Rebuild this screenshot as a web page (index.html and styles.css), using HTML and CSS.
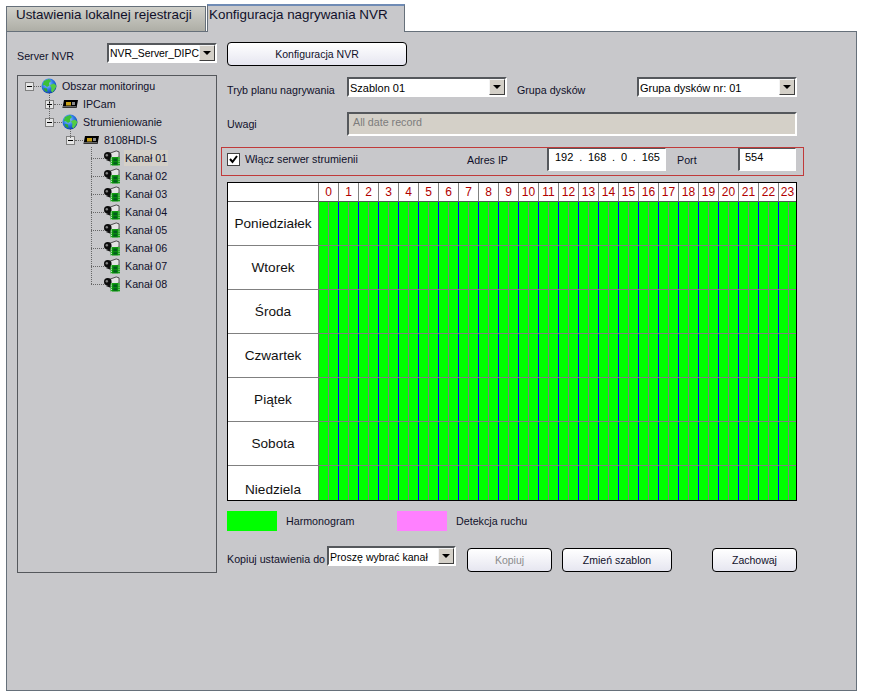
FILE: index.html
```html
<!DOCTYPE html>
<html lang="pl">
<head>
    <meta charset="UTF-8">
    <title>Konfiguracja nagrywania NVR</title>
    <link rel="stylesheet" href="styles.css">
</head>
<body>
    <svg class="sprites" width="0" height="0">
        <symbol id="globe" viewBox="0 0 16 16">
            <defs>
                <radialGradient id="sea" cx="40%" cy="35%" r="70%">
                    <stop offset="0" stop-color="#a8d4ff"/>
                    <stop offset="0.55" stop-color="#2a78e8"/>
                    <stop offset="1" stop-color="#0c3aa0"/>
                </radialGradient>
            </defs>
            <circle cx="8" cy="8" r="7.5" fill="url(#sea)"/>
            <path d="M3 3 L8 1 L10 3 L8 5 L8.5 7.5 L6 9 L3.5 7 L1.5 7.5 Z" fill="#3cc038"/>
            <path d="M9 7 L13 5.5 L15.5 8 L14 11 L11.5 14.5 L10 13 L10.5 10 Z" fill="#54cc44"/>
            <path d="M2.5 10 L6 10.5 L6.5 14 L4 13 Z" fill="#2fa82c"/>
        </symbol>
        <symbol id="device" viewBox="0 0 16 16">
            <path d="M2 4 H16 L14.5 12 H0.5 Z" fill="#000"/>
            <rect x="1" y="10" width="13" height="1.5" fill="#666"/>
            <rect x="4" y="6" width="5" height="3.5" fill="#c8a018"/>
            <rect x="10" y="6" width="3" height="3" fill="#8a8a8a"/>
        </symbol>
        <symbol id="camera" viewBox="0 0 17 16">
            <path d="M6 3 L13 0.5 L16 1.5 L16 7 L8 9 Z" fill="#e4e4e4" stroke="#222" stroke-width="0.8"/>
            <circle cx="4" cy="5.5" r="4" fill="#0c0c0c"/>
            <circle cx="3" cy="5" r="1.3" fill="#808080"/>
            <path d="M2 10 L7 8 L7 12 Z" fill="#111"/>
            <rect x="7" y="7" width="10" height="9" fill="#0a9a0a"/>
            <rect x="10" y="8.5" width="4" height="3" fill="#045a20"/>
            <rect x="10" y="12.5" width="4" height="2.5" fill="#045a20"/>
            <path d="M8 7.5 V16 M16 7.5 V16" stroke="#fff" stroke-width="1" stroke-dasharray="1 1"/>
        </symbol>
        <symbol id="minus" viewBox="0 0 9 9">
            <rect x="0.5" y="0.5" width="8" height="8" fill="#e6e6e6" stroke="#808080"/>
            <path d="M2 4.5 H7" stroke="#000"/>
        </symbol>
        <symbol id="plus" viewBox="0 0 9 9">
            <rect x="0.5" y="0.5" width="8" height="8" fill="#e6e6e6" stroke="#808080"/>
            <path d="M2 4.5 H7 M4.5 2 V7" stroke="#000"/>
        </symbol>
    </svg>

    <div class="tabs">
        <div class="tab">Ustawienia lokalnej rejestracji</div>
        <div class="tab tab-active">Konfiguracja nagrywania NVR</div>
    </div>

    <div class="panel">
        <div class="left-col">
            <div class="server-row">
                <span class="server-label">Server NVR</span>
                <div class="combo combo-server"><span class="combo-text">NVR_Server_DIPC</span><span class="combo-btn"></span></div>
            </div>
            <div class="tree">
                <span class="vline vline-root"></span>
                <span class="vline vline-stream"></span>
                <span class="vline vline-device"></span>

                <div class="node lvl0"><svg class="exp"><use href="#minus"/></svg><span class="dots"></span><svg class="ico"><use href="#globe"/></svg><span class="node-text">Obszar monitoringu</span></div>
                <div class="node lvl1"><svg class="exp"><use href="#plus"/></svg><span class="dots"></span><svg class="ico"><use href="#device"/></svg><span class="node-text">IPCam</span></div>
                <div class="node lvl1"><svg class="exp"><use href="#minus"/></svg><span class="dots"></span><svg class="ico"><use href="#globe"/></svg><span class="node-text">Strumieniowanie</span></div>
                <div class="node lvl2"><svg class="exp"><use href="#minus"/></svg><span class="dots"></span><svg class="ico"><use href="#device"/></svg><span class="node-text">8108HDI-S</span></div>
                <div class="node lvl3"><span class="dots"></span><svg class="ico"><use href="#camera"/></svg><span class="node-text node-selected">Kanał 01</span></div>
                <div class="node lvl3"><span class="dots"></span><svg class="ico"><use href="#camera"/></svg><span class="node-text">Kanał 02</span></div>
                <div class="node lvl3"><span class="dots"></span><svg class="ico"><use href="#camera"/></svg><span class="node-text">Kanał 03</span></div>
                <div class="node lvl3"><span class="dots"></span><svg class="ico"><use href="#camera"/></svg><span class="node-text">Kanał 04</span></div>
                <div class="node lvl3"><span class="dots"></span><svg class="ico"><use href="#camera"/></svg><span class="node-text">Kanał 05</span></div>
                <div class="node lvl3"><span class="dots"></span><svg class="ico"><use href="#camera"/></svg><span class="node-text">Kanał 06</span></div>
                <div class="node lvl3"><span class="dots"></span><svg class="ico"><use href="#camera"/></svg><span class="node-text">Kanał 07</span></div>
                <div class="node lvl3"><span class="dots"></span><svg class="ico"><use href="#camera"/></svg><span class="node-text">Kanał 08</span></div>
            </div>
        </div>

        <div class="right-col">
            <button class="btn btn-config">Konfiguracja NVR</button>

            <div class="form-row form-row-plan">
                <span class="field-label">Tryb planu nagrywania</span>
                <div class="combo combo-wide"><span class="combo-text">Szablon 01</span><span class="combo-btn"></span></div>
                <span class="field-label field-label-disk">Grupa dysków</span>
                <div class="combo combo-wide"><span class="combo-text">Grupa dysków nr: 01</span><span class="combo-btn"></span></div>
            </div>

            <div class="form-row form-row-notes">
                <span class="notes-label">Uwagi</span>
                <div class="notes">All date record</div>
            </div>

            <div class="stream-box">
                <span class="checkbox"><svg viewBox="0 0 11 11" width="11" height="11"><path d="M2 5 L4.5 8 L9 2" fill="none" stroke="#000" stroke-width="2"/></svg></span>
                <span class="stream-label">Włącz serwer strumienii</span>
                <span class="ip-label">Adres IP</span>
                <div class="text-box ip-box"><span>192</span><i>.</i><span>168</span><i>.</i><span>0</span><i>.</i><span>165</span></div>
                <span class="port-label">Port</span>
                <div class="text-box port-box">554</div>
            </div>

            <div class="schedule">
                <div class="corner"></div>
                <div class="hour">0</div><div class="hour">1</div><div class="hour">2</div><div class="hour">3</div>
                <div class="hour">4</div><div class="hour">5</div><div class="hour">6</div><div class="hour">7</div>
                <div class="hour">8</div><div class="hour">9</div><div class="hour">10</div><div class="hour">11</div>
                <div class="hour">12</div><div class="hour">13</div><div class="hour">14</div><div class="hour">15</div>
                <div class="hour">16</div><div class="hour">17</div><div class="hour">18</div><div class="hour">19</div>
                <div class="hour">20</div><div class="hour">21</div><div class="hour">22</div><div class="hour">23</div>

                <div class="day">Poniedziałek</div><div class="slots"></div>
                <div class="day">Wtorek</div><div class="slots"></div>
                <div class="day">Środa</div><div class="slots"></div>
                <div class="day">Czwartek</div><div class="slots"></div>
                <div class="day">Piątek</div><div class="slots"></div>
                <div class="day">Sobota</div><div class="slots"></div>
                <div class="day day-last">Niedziela</div><div class="slots slots-last"></div>
            </div>

            <div class="legend">
                <span class="swatch swatch-plan"></span>
                <span class="legend-text legend-plan">Harmonogram</span>
                <span class="swatch swatch-motion"></span>
                <span class="legend-text">Detekcja ruchu</span>
            </div>

            <div class="bottom-row">
                <span class="copy-label">Kopiuj ustawienia do</span>
                <div class="combo combo-copy"><span class="combo-text">Proszę wybrać kanał</span><span class="combo-btn"></span></div>
                <button class="btn btn-copy" disabled>Kopiuj</button>
                <button class="btn btn-template">Zmień szablon</button>
                <button class="btn btn-save">Zachowaj</button>
            </div>
        </div>
    </div>
</body>
</html>
```

FILE: styles.css
```css
:root {
    --panel: #c8c8cb;
    --face: #d4d0c8;
    --text: #10102a;
}
* {
    box-sizing: border-box;
}
body {
    margin: 0;
    background: white;
    font-family: "Liberation Sans", Arial, sans-serif;
    font-size: 10.7px;
    color: var(--text);
}
.sprites {
    display: block;
    height: 0;
}

/* tabs */
.tabs {
    display: flex;
    align-items: flex-end;
    height: 32px;
    padding: 4px 0 0 6px;
    position: relative;
    z-index: 1;
}
.tab {
    width: 200px;
    height: 25px;
    padding: 0 0 0 9px;
    margin-bottom: 1px;
    font-size: 13.4px;
    white-space: nowrap;
    background: linear-gradient(#d0d0ca, #aeaea6);
    border: 1px solid #66707a;
    border-bottom: none;
}
.tab-active {
    width: 198px;
    height: 28px;
    margin: 0 0 0 1px;
    padding: 1px 0 0 1px;
    background: var(--panel);
    border: 1px solid #66707a;
    border-top: 2px solid #6f8bb5;
    border-bottom: none;
}

/* main panel */
.panel {
    display: flex;
    gap: 4px;
    width: 851px;
    height: 660px;
    margin: -1px 0 0 6px;
    padding: 10px;
    background: var(--panel);
    border: 1px solid #66707a;
}
.left-col {
    width: 200px;
}
.server-row {
    display: flex;
    align-items: center;
    height: 21px;
}
.server-label {
    width: 90px;
    padding-top: 6px;
}

/* combo boxes */
.combo {
    display: flex;
    align-items: center;
    height: 20px;
    background: white;
    border: 2px solid;
    border-color: #55585c white white #55585c;
    font-size: 11px;
    color: #000;
}
.combo-text {
    flex: 1;
    padding: 1px 0 0 1px;
    white-space: nowrap;
    overflow: hidden;
}
.combo-btn {
    position: relative;
    flex: none;
    width: 16px;
    height: 16px;
    background: var(--face);
    border: 1px solid;
    border-color: #f4f4f4 #404040 #404040 #f4f4f4;
}
.combo-btn::after {
    content: "";
    position: absolute;
    left: 3px;
    top: 5px;
    border: 4px solid transparent;
    border-top: 4px solid black;
    border-bottom: none;
}
.combo-server {
    width: 110px;
    font-size: 10.4px;
}
.combo-wide {
    width: 160px;
}
.combo-copy {
    width: 129px;
    font-size: 10.6px;
}

/* tree */
.tree {
    position: relative;
    height: 498px;
    margin-top: 12px;
    padding-top: 1px;
    border: 1px solid #55585c;
}
.node {
    display: flex;
    align-items: center;
    height: 18px;
}
.lvl0 {
    padding-left: 7px;
}
.lvl0 .dots {
    width: 7px;
}
.lvl1 {
    padding-left: 27px;
}
.lvl2 {
    padding-left: 48px;
}
.lvl3 {
    padding-left: 73px;
}
.exp {
    width: 9px;
    height: 9px;
    flex: none;
}
.dots {
    width: 8px;
    border-top: 1px dotted #666;
}
.lvl3 .dots {
    width: 13px;
}
.ico {
    width: 16px;
    height: 16px;
    flex: none;
}
.node-text {
    margin-left: 4px;
    padding: 2px 1px;
    white-space: nowrap;
}
.node-selected {
    background: var(--face);
}
.vline {
    position: absolute;
    border-left: 1px dotted #666;
}
.vline-root {
    left: 31px;
    top: 17px;
    height: 27px;
}
.vline-stream {
    left: 52px;
    top: 53px;
    height: 9px;
}
.vline-device {
    left: 73px;
    top: 71px;
    height: 137px;
}

/* right column */
.right-col {
    width: 590px;
}
.btn {
    height: 24px;
    padding: 0;
    font-family: inherit;
    font-size: 10.5px;
    color: var(--text);
    background: linear-gradient(#ffffff, #e6e6f0);
    border: 1px solid black;
    border-radius: 4px;
}
.btn-config {
    display: block;
    width: 180px;
    margin-left: 6px;
}
.form-row {
    display: flex;
    margin-left: 6px;
}
.form-row-plan {
    align-items: center;
    margin-top: 11px;
}
.field-label {
    width: 120px;
    padding-top: 5px;
}
.field-label-disk {
    margin-left: 10px;
}
.form-row-notes {
    align-items: center;
    margin-top: 15px;
}
.notes-label {
    width: 120px;
}
.notes {
    width: 450px;
    height: 24px;
    padding: 2px 4px;
    color: #7c7c7c;
    background: var(--face);
    border: 2px solid;
    border-color: #55585c white white #55585c;
}

/* streaming */
.stream-box {
    display: flex;
    align-items: center;
    width: 583px;
    height: 29px;
    margin-top: 11px;
    padding-left: 5px;
    border: 1px solid #c03a3a;
}
.checkbox {
    display: flex;
    align-items: center;
    justify-content: center;
    width: 13px;
    height: 13px;
    margin-top: -4px;
    background: white;
    border: 1px solid #404040;
}
.stream-label {
    width: 222px;
    margin: -6px 0 0 5px;
}
.ip-label {
    width: 80px;
    margin-top: -3px;
}
.text-box {
    height: 23px;
    margin-top: -4px;
    background: white;
    border: 1px solid;
    border-color: #55585c white white #55585c;
    border-left-width: 2px;
    color: #000;
    font-size: 11px;
}
.ip-box {
    display: flex;
    justify-content: space-between;
    width: 119px;
    padding: 2px 5px 0 6px;
}
.ip-box i {
    font-style: normal;
}
.port-label {
    width: 61px;
    margin: -3px 0 0 11px;
}
.port-box {
    width: 58px;
    padding: 2px 5px;
}

/* schedule grid */
.schedule {
    display: grid;
    grid-template-columns: 90px repeat(23, 20px) 18px;
    grid-template-rows: 19px repeat(6, 44px) 34px;
    width: 570px;
    margin: 6px 0 0 6px;
    background: white;
    border: 1px solid black;
}
.corner {
    border-bottom: 1px solid #555;
}
.hour {
    display: flex;
    align-items: center;
    justify-content: center;
    font-size: 12px;
    color: #b00000;
    border-left: 1px solid #808080;
    border-bottom: 1px solid #555;
}
.day {
    display: flex;
    align-items: center;
    justify-content: center;
    font-size: 13.6px;
    color: #111;
    border-bottom: 1px solid #808080;
}
.day-last {
    align-items: flex-end;
    padding-bottom: 3px;
    border-bottom: none;
}
.slots {
    grid-column: 2 / -1;
    background-color: #00ff00;
    background-image: repeating-linear-gradient(90deg,
        #0000ff 0, #0000ff 1px,
        #00ff00 1px, #00ff00 10px,
        #808080 10px, #808080 11px,
        #00ff00 11px, #00ff00 20px);
    border-bottom: 1px solid #808080;
    box-shadow: inset 1px 0 0 #707070;
}
.slots-last {
    border-bottom: none;
}

/* legend */
.legend {
    display: flex;
    align-items: center;
    margin: 10px 0 0 6px;
}
.swatch {
    width: 50px;
    height: 20px;
}
.swatch-plan {
    background: #00ff00;
}
.swatch-motion {
    background: #ff80ff;
}
.legend-text {
    margin-left: 9px;
}
.legend-plan {
    width: 111px;
}

/* bottom */
.bottom-row {
    display: flex;
    align-items: flex-start;
    margin: 15px 0 0 6px;
}
.copy-label {
    width: 100px;
    padding-top: 7px;
    white-space: nowrap;
}
.btn-copy {
    width: 85px;
    margin: 2px 0 0 11px;
    color: #8c8c8c;
}
.btn-template {
    width: 110px;
    margin: 2px 0 0 10px;
}
.btn-save {
    width: 85px;
    margin: 2px 0 0 40px;
}
```
